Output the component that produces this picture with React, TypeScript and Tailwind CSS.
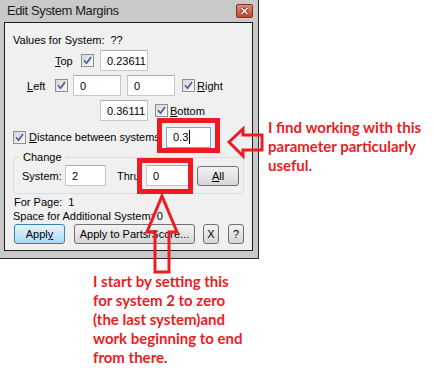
import React from "react";

function Check() {
  return (
    <span className="flex h-[13px] w-[13px] shrink-0 items-center justify-center border border-[#8e8f8f] bg-linear-to-br from-[#d6d6d6] to-[#fafafa]">
      <svg width="9" height="9" viewBox="0 0 9 9">
        <path d="M1 4.2 L3.6 7.2 L8 1" stroke="#4a5f9c" strokeWidth="1.7" fill="none" />
      </svg>
    </span>
  );
}

function Field({ value, w, focus }: { value: string; w: string; focus?: boolean }) {
  return (
    <div
      className={`flex h-[21px] ${w} shrink-0 items-center border bg-white pl-[6px] text-black ${
        focus ? "border-[#6fa7d8]" : "border-[#c3c7cc] border-t-[#abadb3]"
      }`}
    >
      {value}
      {focus && <span className="ml-px h-[14px] w-px bg-black" />}
    </div>
  );
}

function Button({ children, w, primary }: { children: React.ReactNode; w: string; primary?: boolean }) {
  return (
    <div
      className={`flex h-[20px] ${w} shrink-0 items-center justify-center whitespace-nowrap rounded-[3px] border text-black ${
        primary
          ? "border-[#3c7fb1] bg-linear-to-b from-[#e5f4fc] to-[#a9daf6]"
          : "border-[#707070] bg-linear-to-b from-[#f3f3f3] to-[#d6d6d6]"
      }`}
    >
      {children}
    </div>
  );
}

function Dialog() {
  return (
    <div className="flex h-[259px] w-[259px] shrink-0 flex-col border-r border-b border-[#2b2b2b] bg-[#c9c9c9]">
      {/* title bar */}
      <div className="flex h-[22px] items-start justify-between pl-[7px] pr-[5px]">
        <span className="mt-[1px] whitespace-nowrap text-[13px] leading-[20px] tracking-[-0.4px] text-[#1b1b1b]">
          Edit System Margins
        </span>
        <div className="mt-[4px] flex h-[14px] w-[17px] items-center justify-center rounded-[2px] border border-[#7a3426] bg-linear-to-b from-[#e58a6e] to-[#c4412a]">
          <svg width="9" height="8" viewBox="0 0 9 8">
            <path d="M1.5 1 L7.5 7 M7.5 1 L1.5 7" stroke="#5a2418" strokeWidth="3" />
            <path d="M1.5 1 L7.5 7 M7.5 1 L1.5 7" stroke="#ffffff" strokeWidth="1.6" />
          </svg>
        </div>
      </div>

      {/* client area */}
      <div className="ml-[4px] flex h-[229px] w-[249px] flex-col whitespace-nowrap border border-[#1e1e1e] bg-[#f0f0f0] pl-[8px] text-[11px] leading-[14px] text-black">
        <div className="mt-[9px] flex h-[16px] items-center">
          Values for System:<span className="ml-[6px]">??</span>
        </div>

        <div className="mt-[2px] flex h-[21px] items-center">
          <span className="ml-[42px] w-[26px]">
            <u>T</u>op
          </span>
          <Check />
          <div className="ml-[6px]">
            <Field value="0.23611" w="w-[48px]" />
          </div>
        </div>

        <div className="mt-[4px] flex h-[21px] items-center">
          <span className="ml-[14px] w-[28px]">
            <u>L</u>eft
          </span>
          <Check />
          <div className="ml-[5px] flex gap-[6px]">
            <Field value="0" w="w-[48px]" />
            <Field value="0" w="w-[48px]" />
          </div>
          <div className="ml-[7px] flex items-center gap-[2px]">
            <Check />
            <span>
              <u>R</u>ight
            </span>
          </div>
        </div>

        <div className="mt-[4px] flex h-[21px] items-center">
          <div className="ml-[87px]">
            <Field value="0.36111" w="w-[48px]" />
          </div>
          <div className="ml-[7px] flex items-center gap-[2px]">
            <Check />
            <span>
              <u>B</u>ottom
            </span>
          </div>
        </div>

        <div className="mt-[6px] flex h-[20px] items-center">
          <Check />
          <span className="ml-[3px] w-[137px]">
            <u>D</u>istance between systems
          </span>
          <Field value="0.3" w="w-[45px]" focus />
        </div>

        <div className="mt-[10px] flex h-[37px] w-[231px] flex-col rounded-[3px] border border-[#d5dfe5]">
          <span className="-mt-[8px] ml-[6px] self-start bg-[#f0f0f0] px-[3px] leading-[14px]">Change</span>
          <div className="mt-[1px] flex items-center pl-[8px]">
            <span className="w-[43px]">System:</span>
            <Field value="2" w="w-[41px]" />
            <span className="ml-[11px] w-[29px]">Thru</span>
            <Field value="0" w="w-[43px]" />
            <div className="ml-[8px]">
              <Button w="w-[42px]">
                <u>A</u>ll
              </Button>
            </div>
          </div>
        </div>

        <div className="mt-[1px] flex h-[14px] items-center pl-[1px]">
          For Page:<span className="ml-[6px]">1</span>
        </div>
        <div className="flex h-[14px] items-center">Space for Additional System: 0</div>

        <div className="mt-[1px] flex items-center pl-[1px]">
          <Button w="w-[51px]" primary>
            Appl<u>y</u>
          </Button>
          <div className="ml-[9px]">
            <Button w="w-[121px]">Apply to Parts/Score...</Button>
          </div>
          <div className="ml-[8px]">
            <Button w="w-[16px]">X</Button>
          </div>
          <div className="ml-[9px]">
            <Button w="w-[16px]">?</Button>
          </div>
        </div>
      </div>
    </div>
  );
}

export default function App() {
  return (
    <div className="relative h-[373px] w-[434px] overflow-hidden bg-white font-['Liberation_Sans',sans-serif]">
      <div className="flex">
        <Dialog />
        <p className="ml-[9px] mt-[118px] font-['Lato',sans-serif] text-[15px] leading-[19px] font-bold text-[#ed1c24]">
          I find working with this
          <br />
          parameter particularly
          <br />
          useful.
        </p>
      </div>
      <p className="ml-[93px] mt-[13px] font-['Lato',sans-serif] text-[15px] leading-[19px] font-bold text-[#ed1c24]">
        I start by setting this
        <br />
        for system 2 to zero
        <br />
        (the last system)and
        <br />
        work beginning to end
        <br />
        from there.
      </p>

      {/* annotation shapes */}
      <svg className="pointer-events-none absolute inset-0" width="434" height="373">
        <rect x="159.5" y="120.5" width="58" height="30" fill="none" stroke="#ed1c24" strokeWidth="5" />
        <rect x="139.5" y="160.5" width="51" height="31" fill="none" stroke="#ed1c24" strokeWidth="5" />
        <polygon
          points="229,142 243,129 243,135 262,135 262,150 243,150 243,156"
          fill="none"
          stroke="#ed1c24"
          strokeWidth="3"
        />
        <polygon
          points="162,196 177,232 169,232 169,272 155,272 155,232 147,232"
          fill="none"
          stroke="#ed1c24"
          strokeWidth="3"
        />
      </svg>
    </div>
  );
}
